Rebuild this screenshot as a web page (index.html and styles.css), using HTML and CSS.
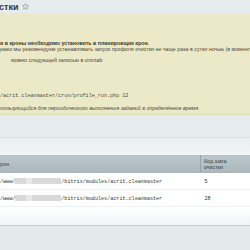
FILE: index.html
```html
<!DOCTYPE html>
<html lang="ru">
<head>
    <meta charset="UTF-8">
    <title>Профили очистки</title>
    <link rel="stylesheet" href="styles.css">
</head>
<body>
    <div class="page">
        <div class="title">
            <span class="title-text">стки</span>
            <svg class="star" width="7" height="7" viewBox="0 0 14 14">
                <path d="M7 1 L8.8 5 L13 5.4 L9.8 8.2 L10.8 12.6 L7 10.3 L3.2 12.6 L4.2 8.2 L1 5.4 L5.2 5 Z" fill="none" stroke="#8e9a9e" stroke-width="1.4" stroke-linejoin="round"/>
            </svg>
        </div>

        <div class="note">
            <p class="line strong">и в кроны необходимо установить в планировщик крон.</p>
            <p class="line shifted">однако мы рекомендуем устанавливать запуск профиля очистки не чаще раза в сутки ночью (в моменты минимальной нагрузки)</p>
            <p class="line indent">можно следующей записью в crontab</p>
            <p class="line code">/acrit.cleanmaster/cron/profile_run.php 12</p>
            <p class="line italic">пользующийся для периодического выполнения заданий в определённое время.</p>
        </div>

        <div class="toolbar"></div>
        <div class="toolbar-lower"></div>

        <table class="grid">
            <thead>
                <tr>
                    <th class="col-path">рон</th>
                    <th class="col-step">Код шага<br>очистки</th>
                </tr>
            </thead>
            <tbody>
                <tr>
                    <td class="col-path"><span class="mono">/www/</span><span class="blur"><i></i></span><span class="mono">/bitrix/modules/acrit.cleanmaster</span></td>
                    <td class="col-step">5</td>
                </tr>
                <tr>
                    <td class="col-path"><span class="mono">/www/</span><span class="blur"><i></i></span><span class="mono">/bitrix/modules/acrit.cleanmaster</span></td>
                    <td class="col-step">28</td>
                </tr>
            </tbody>
        </table>
        <div class="grid-footer"></div>
        <div class="bottom"></div>
    </div>
</body>
</html>
```

FILE: styles.css
```css
body {
    margin: 0;
    font-family: "Liberation Sans", Arial, sans-serif;
    background-color: #e4e9eb;
}

.page {
    width: 250px;
    height: 250px;
    overflow: hidden;
}

.title {
    height: 13px;
    display: flex;
    align-items: center;
    background-color: #e6ebed;
    white-space: nowrap;
}

.title-text {
    font-size: 9px;
    font-weight: bold;
    color: #2f3a3d;
    margin-left: -1px;
}

.star {
    margin-left: 4px;
}

/* yellow info box */
.note {
    height: 102px;
    background-color: #ece9c9;
    border-bottom: 1px solid #ddd9b4;
    color: #4d4b3a;
    padding-top: 27px;
    box-sizing: border-box;
}

.line {
    margin: 0;
    font-size: 5.3px;
    line-height: 6px;
    height: 6px;
    white-space: nowrap;
    overflow: hidden;
}

.strong {
    font-weight: bold;
    color: #3b3a2c;
}

.shifted {
    text-indent: -5px;
}

.indent {
    margin-top: 5px;
    padding-left: 11px;
}

.code {
    margin-top: 30px;
    font-family: "Liberation Mono", monospace;
    font-size: 5.1px;
}

.italic {
    margin-top: 6px;
    font-style: italic;
}

.toolbar {
    height: 22px;
    background-color: #e6ebed;
}

.toolbar-lower {
    height: 16px;
    border-top: 1px solid #dde3e5;
    background: linear-gradient(#e9eef0, #f1f4f5);
}

/* table */
.grid {
    width: 250px;
    border-collapse: collapse;
    table-layout: fixed;
}

.grid th {
    height: 18px;
    padding: 0 0 0 3px;
    text-align: left;
    font-weight: normal;
    font-size: 5.3px;
    line-height: 6px;
    color: #33403f;
    background: linear-gradient(#bcc7cb, #aab6ba);
    border-top: 1px solid #f4f7f8;
}

.grid th.col-path {
    padding-left: 0;
}

.grid th.col-step {
    border-left: 1px solid #97a4a8;
}

.col-path {
    width: 200px;
}

.grid td {
    height: 16px;
    padding: 0 0 0 4px;
    background-color: #ffffff;
    border-bottom: 1px solid #eef1f2;
    font-size: 5.3px;
    color: #333;
    white-space: nowrap;
    overflow: hidden;
}

.grid td.col-path {
    padding-left: 0;
}

.mono {
    font-family: "Liberation Mono", monospace;
    font-size: 5.1px;
    color: #333;
    vertical-align: middle;
}

.blur {
    display: inline-block;
    width: 46px;
    height: 6px;
    background-color: #d9d9d9;
    vertical-align: middle;
}

.blur i {
    display: block;
    margin-left: 11px;
    width: 6px;
    height: 6px;
    background-color: #e8e8e8;
}

.grid-footer {
    height: 18px;
    background: linear-gradient(#ffffff, #f0f3f4);
    border-bottom: 1px solid #c7cfd2;
}

.bottom {
    height: 30px;
    background-color: #e4e9eb;
}
```
